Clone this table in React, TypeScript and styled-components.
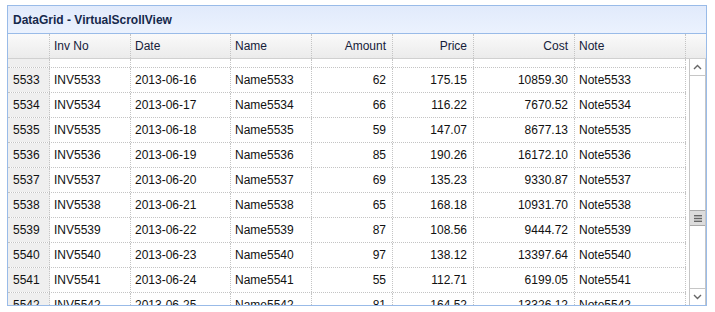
import styled, { createGlobalStyle } from "styled-components";

const GlobalStyle = createGlobalStyle`
  html, body {
    margin: 0;
    padding: 0;
    background: #ffffff;
  }
  body {
    padding: 5px 0 0 7px;
    font-family: "Liberation Sans", Arial, sans-serif;
    font-size: 12px;
    color: #111;
  }
`;

type Column = {
  key: string;
  title: string;
  width: number;
  align?: "left" | "right";
};

const columns: Column[] = [
  { key: "inv", title: "Inv No", width: 81 },
  { key: "date", title: "Date", width: 100 },
  { key: "name", title: "Name", width: 81 },
  { key: "amount", title: "Amount", width: 81, align: "right" },
  { key: "price", title: "Price", width: 81, align: "right" },
  { key: "cost", title: "Cost", width: 101, align: "right" },
  { key: "note", title: "Note", width: 111 },
];

type Row = {
  id: number;
  inv: string;
  date: string;
  name: string;
  amount: string;
  price: string;
  cost: string;
  note: string;
};

const raw: [number, string, number, string, string][] = [
  [5533, "2013-06-16", 62, "175.15", "10859.30"],
  [5534, "2013-06-17", 66, "116.22", "7670.52"],
  [5535, "2013-06-18", 59, "147.07", "8677.13"],
  [5536, "2013-06-19", 85, "190.26", "16172.10"],
  [5537, "2013-06-20", 69, "135.23", "9330.87"],
  [5538, "2013-06-21", 65, "168.18", "10931.70"],
  [5539, "2013-06-22", 87, "108.56", "9444.72"],
  [5540, "2013-06-23", 97, "138.12", "13397.64"],
  [5541, "2013-06-24", 55, "112.71", "6199.05"],
  [5542, "2013-06-25", 81, "164.52", "13326.12"],
];

const rows: Row[] = raw.map(([id, date, amount, price, cost]) => ({
  id,
  inv: `INV${id}`,
  date,
  name: `Name${id}`,
  amount: String(amount),
  price,
  cost,
  note: `Note${id}`,
}));

const Panel = styled.div`
  width: 698px;
  height: 299px;
  border: 1px solid #99bbe8;
  display: flex;
  flex-direction: column;
  overflow: hidden;
`;

const TitleBar = styled.div`
  height: 27px;
  border-bottom: 1px solid #99bbe8;
  background: linear-gradient(#e1eafb, #ebf2fe);
  display: flex;
  align-items: center;
  padding-left: 5px;
  font-weight: bold;
  font-size: 12px;
  color: #15284b;
`;

const HeaderRow = styled.div`
  display: flex;
  height: 24px;
  border-bottom: 1px solid #d0d0d0;
  background: linear-gradient(#fafafa, #ebebeb);
`;

const HeaderCell = styled.div<{ $w: number; $align?: string; $last?: boolean }>`
  flex: 0 0 ${(p) => p.$w}px;
  box-sizing: border-box;
  border-right: ${(p) => (p.$last ? "none" : "1px dotted #c4c4c4")};
  padding: 0 ${(p) => (p.$align === "right" ? "6px" : "0")} 0
    ${(p) => (p.$align === "right" ? "0" : "4px")};
  display: flex;
  align-items: center;
  justify-content: ${(p) => (p.$align === "right" ? "flex-end" : "flex-start")};
  color: #15203a;
  white-space: nowrap;
`;

const Body = styled.div`
  flex: 1;
  display: flex;
  min-height: 0;
`;

const Rows = styled.div`
  width: 678px;
  overflow: hidden;
`;

const GridRow = styled.div<{ $h: number }>`
  display: flex;
  height: ${(p) => p.$h}px;
  border-bottom: 1px dotted #c4c4c4;
`;

const NumCell = styled.div`
  flex: 0 0 42px;
  box-sizing: border-box;
  border-right: 1px dotted #c4c4c4;
  background: #efefef;
  padding-left: 5px;
  display: flex;
  align-items: center;
`;

const Cell = styled.div<{ $w: number; $align?: string }>`
  flex: 0 0 ${(p) => p.$w}px;
  box-sizing: border-box;
  border-right: 1px dotted #c4c4c4;
  padding: 0 ${(p) => (p.$align === "right" ? "6px" : "0")} 0
    ${(p) => (p.$align === "right" ? "0" : "4px")};
  display: flex;
  align-items: center;
  justify-content: ${(p) => (p.$align === "right" ? "flex-end" : "flex-start")};
  white-space: nowrap;
`;

const Gap = styled.div`
  flex: 0 0 3px;
`;

const ScrollBar = styled.div`
  flex: 0 0 17px;
  box-sizing: border-box;
  border-left: 1px solid #c6c6c6;
  border-right: 1px solid #c6c6c6;
  display: flex;
  flex-direction: column;
  background: #fff;
`;

const ArrowButton = styled.div<{ $down?: boolean }>`
  height: 16px;
  border-top: ${(p) => (p.$down ? "1px solid #c6c6c6" : "none")};
  border-bottom: ${(p) => (p.$down ? "none" : "1px solid #c6c6c6")};
  display: flex;
  align-items: center;
  justify-content: center;
`;

const Track = styled.div`
  flex: 1;
  display: flex;
  flex-direction: column;
`;

const Thumb = styled.div`
  margin-top: 134px;
  height: 16px;
  box-sizing: border-box;
  border-top: 1px solid #aaa;
  border-bottom: 1px solid #aaa;
  background: #dcdcdc;
  display: flex;
  align-items: center;
  justify-content: center;
`;

const Chevron = ({ up }: { up?: boolean }) => (
  <svg width="9" height="6" viewBox="0 0 9 6">
    <path
      d={up ? "M1 5 L4.5 1.5 L8 5" : "M1 1 L4.5 4.5 L8 1"}
      fill="none"
      stroke="#666"
      strokeWidth="1.4"
    />
  </svg>
);

const Grip = () => (
  <svg width="8" height="7" viewBox="0 0 8 7">
    <rect x="0" y="0" width="8" height="1.4" fill="#666" />
    <rect x="0" y="2.8" width="8" height="1.4" fill="#666" />
    <rect x="0" y="5.6" width="8" height="1.4" fill="#666" />
  </svg>
);

const App = () => {
  return (
    <>
      <GlobalStyle />
      <Panel>
        <TitleBar>DataGrid - VirtualScrollView</TitleBar>
        <HeaderRow>
          <HeaderCell $w={42} />
          {columns.map((c) => (
            <HeaderCell key={c.key} $w={c.width} $align={c.align}>
              {c.title}
            </HeaderCell>
          ))}
          <HeaderCell $w={20} $last />
        </HeaderRow>
        <Body>
          <Rows>
            <GridRow $h={8}>
              <NumCell />
              {columns.map((c) => (
                <Cell key={c.key} $w={c.width} />
              ))}
            </GridRow>
            {rows.map((r) => (
              <GridRow key={r.id} $h={24}>
                <NumCell>{r.id}</NumCell>
                {columns.map((c) => (
                  <Cell key={c.key} $w={c.width} $align={c.align}>
                    {r[c.key as keyof Row]}
                  </Cell>
                ))}
              </GridRow>
            ))}
          </Rows>
          <Gap />
          <ScrollBar>
            <ArrowButton>
              <Chevron up />
            </ArrowButton>
            <Track>
              <Thumb>
                <Grip />
              </Thumb>
            </Track>
            <ArrowButton $down>
              <Chevron />
            </ArrowButton>
          </ScrollBar>
        </Body>
      </Panel>
    </>
  );
};

export default App;
